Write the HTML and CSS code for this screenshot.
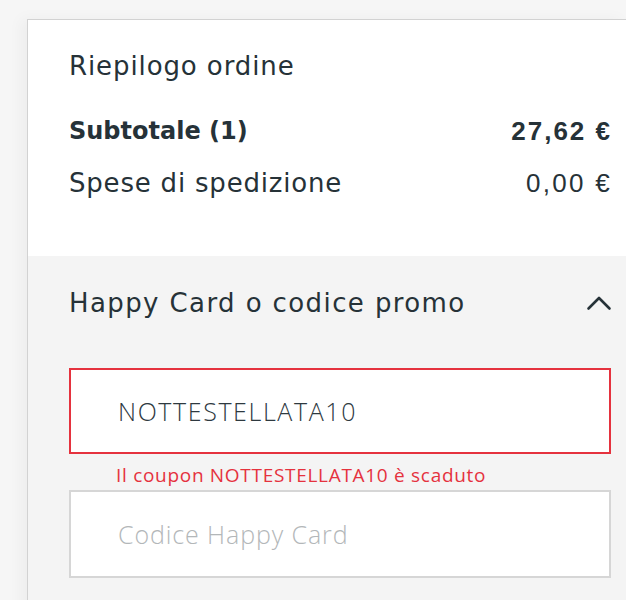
FILE: index.html
```html
<!DOCTYPE html>
<html lang="it">
<head>
<meta charset="utf-8">
<title>Riepilogo ordine</title>
<link rel="stylesheet" href="styles.css">
</head>
<body>
<div class="card">
  <section class="summary">
    <h2 class="title">Riepilogo ordine</h2>
    <div class="row row-sub">
      <span class="label strong">Subtotale (1)</span>
      <span class="amount strong">27,62 €</span>
    </div>
    <div class="row row-ship">
      <span class="label">Spese di spedizione</span>
      <span class="amount">0,00 €</span>
    </div>
  </section>
  <section class="promo">
    <div class="promo-head">
      <span class="promo-title">Happy Card o codice promo</span>
      <svg class="chevron" width="26" height="16" viewBox="0 0 26 16" aria-hidden="true">
        <polyline points="2.5,13.5 13,3 23.5,13.5" fill="none" stroke="#263238" stroke-width="2.6" stroke-linecap="round" stroke-linejoin="round"/>
      </svg>
    </div>
    <div class="field field-error">NOTTESTELLATA10</div>
    <div class="error-msg">Il coupon NOTTESTELLATA10 è scaduto</div>
    <div class="field field-empty"><span class="placeholder">Codice Happy Card</span></div>
  </section>
</div>
</body>
</html>
```
FILE: styles.css
```css
html, body {
  margin: 0;
  padding: 0;
}
body {
  background: #f6f6f6;
  height: 600px;
  overflow: hidden;
}
.card {
  margin: 19px 0 0 27px;
  background: #ffffff;
  border: 1px solid #d2d2d2;
  border-right: none;
  border-bottom: none;
  box-shadow: -6px 0 14px rgba(0, 0, 0, 0.04);
  height: 700px;
  display: flex;
  flex-direction: column;
}
.summary {
  padding: 30px 15px 57px 41px;
  color: #263238;
}
.title {
  margin: 0;
  font-family: "DejaVu Sans", sans-serif;
  font-weight: 400;
  font-size: 26px;
  line-height: 32px;
  letter-spacing: 0.9px;
}
.row {
  display: flex;
  justify-content: space-between;
  align-items: center;
  height: 32px;
}
.row-sub {
  margin-top: 33px;
}
.row-ship {
  margin-top: 20px;
}
.label {
  font-family: "DejaVu Sans", sans-serif;
  font-size: 26px;
  letter-spacing: 0.8px;
}
.label.strong {
  font-weight: 700;
  font-size: 24px;
  letter-spacing: 0;
}
.amount {
  font-family: "Liberation Sans", Arial, sans-serif;
  font-size: 26px;
  letter-spacing: 2.3px;
  margin-right: -1px;
}
.amount.strong {
  font-weight: 700;
  letter-spacing: 2px;
}
.promo {
  flex: 1;
  background: #f4f4f4;
  padding: 31px 15px 0 41px;
}
.promo-head {
  display: flex;
  justify-content: space-between;
  align-items: center;
  height: 32px;
  color: #263238;
}
.promo-title {
  font-family: "DejaVu Sans", sans-serif;
  font-size: 26px;
  letter-spacing: 1.4px;
}
.chevron {
  display: block;
  margin-right: -1px;
}
.field {
  box-sizing: border-box;
  background: #ffffff;
  display: flex;
  align-items: center;
  padding-left: 47px;
  font-family: "Open Sans", sans-serif;
  font-weight: 300;
  font-size: 25px;
  letter-spacing: 1.6px;
}
.field-error {
  margin-top: 49px;
  height: 86px;
  border: 2px solid #e5323e;
  color: #2e393f;
}
.error-msg {
  margin-top: 11px;
  height: 20px;
  line-height: 20px;
  padding-left: 47px;
  font-family: "Open Sans", sans-serif;
  font-size: 19px;
  letter-spacing: 0.7px;
  color: #e5323e;
}
.field-empty {
  margin-top: 5px;
  height: 88px;
  border: 2px solid #d6d6d6;
}
.placeholder {
  color: #b3b7b9;
  letter-spacing: 0.9px;
}
```
